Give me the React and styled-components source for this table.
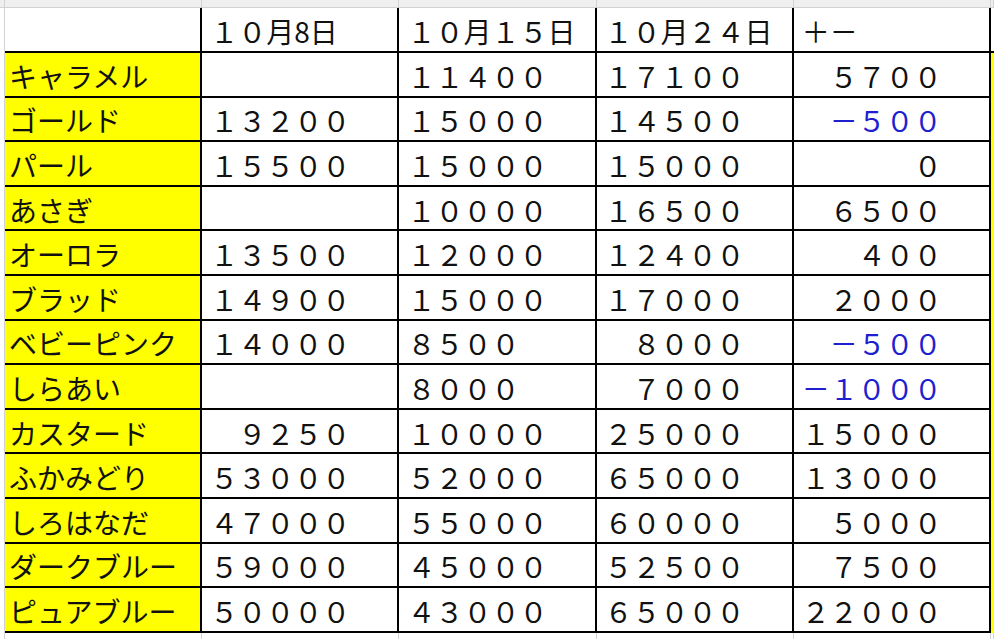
import React from 'react'
import styled, { createGlobalStyle } from 'styled-components'

const GlobalStyle = createGlobalStyle`
  html, body {
    margin: 0;
    padding: 0;
    background: #fff;
    overflow: hidden;
  }
  body {
    font-family: "Noto Sans CJK JP", "Noto Sans", sans-serif;
    color: #111;
  }
`;

const COLS = '5px repeat(5, 197.2px) 1fr';

const Sheet = styled.div`
  display: flex;
  flex-direction: column;
  width: 994px;
  height: 639px;
`;

const Row = styled.div`
  display: grid;
  grid-template-columns: ${COLS};
  height: ${p => p.$h}px;
  flex: ${p => (p.$grow ? '1' : 'none')};
`;

const Gutter = styled.div`
  border-right: 1px solid #d2d2d2;
  background: ${p => p.$bg || '#fff'};
  border-bottom: ${p => (p.$line ? '1px solid #d2d2d2' : 'none')};
`;

const GridCell = styled.div`
  box-sizing: border-box;
  background: ${p => p.$bg || '#fff'};
  border-right: 1px solid #d2d2d2;
  border-bottom: ${p => (p.$line ? '1px solid #d2d2d2' : 'none')};
`;

const Cell = styled.div`
  box-sizing: border-box;
  display: flex;
  align-items: center;
  padding: 3px 0 0 ${p => (p.$label ? 4 : 8)}px;
  background: ${p => (p.$label ? '#ffff00' : '#fff')};
  color: ${p => (p.$neg ? '#1f1fd0' : '#111')};
  border-right: 2px solid #000;
  border-bottom: 2px solid #000;
  font-size: 28px;
  line-height: 1;
  white-space: pre;
  overflow: hidden;
`;

const Edge = styled.div`
  background: ${p => p.$bg};
  border-bottom: ${p => (p.$line ? '2px solid #000' : 'none')};
`;

const header = ['', '１０月8日', '１０月１５日', '１０月２４日', '＋－'];

const rows = [
  ['キャラメル', '', '１１４００', '１７１００', '　５７００'],
  ['ゴールド', '１３２００', '１５０００', '１４５００', '　－５００'],
  ['パール', '１５５００', '１５０００', '１５０００', '　　　　０'],
  ['あさぎ', '', '１００００', '１６５００', '　６５００'],
  ['オーロラ', '１３５００', '１２０００', '１２４００', '　　４００'],
  ['ブラッド', '１４９００', '１５０００', '１７０００', '　２０００'],
  ['ベビーピンク', '１４０００', '８５００', '　８０００', '　－５００'],
  ['しらあい', '', '８０００', '　７０００', '－１０００'],
  ['カスタード', '　９２５０', '１００００', '２５０００', '１５０００'],
  ['ふかみどり', '５３０００', '５２０００', '６５０００', '１３０００'],
  ['しろはなだ', '４７０００', '５５０００', '６００００', '　５０００'],
  ['ダークブルー', '５９０００', '４５０００', '５２５００', '　７５００'],
  ['ピュアブルー', '５００００', '４３０００', '６５０００', '２２０００'],
];

function StripRow({ h, bg, line, grow }) {
  return (
    <Row $h={h} $grow={grow}>
      <Gutter $bg={bg} $line={line} />
      {[0, 1, 2, 3, 4].map(i => (
        <GridCell key={i} $bg={bg} $line={line} />
      ))}
      <GridCell $bg={bg} $line={line} />
    </Row>
  );
}

export default function App() {
  return (
    <>
      <GlobalStyle />
      <Sheet>
        <StripRow h={8} bg="#efefef" line />
        <Row $h={45}>
          <Gutter />
          {header.map((t, i) => (
            <Cell key={i}>{t}</Cell>
          ))}
          <Edge $bg="#fff" $line />
        </Row>
        {rows.map((r, ri) => (
          <Row key={ri} $h={44.6}>
            <Gutter />
            {r.map((t, ci) => (
              <Cell
                key={ci}
                $label={ci === 0}
                $neg={ci === 4 && t.includes('－')}
              >
                {t}
              </Cell>
            ))}
            <Edge $bg="#ffff00" />
          </Row>
        ))}
        <StripRow grow />
      </Sheet>
    </>
  );
}
